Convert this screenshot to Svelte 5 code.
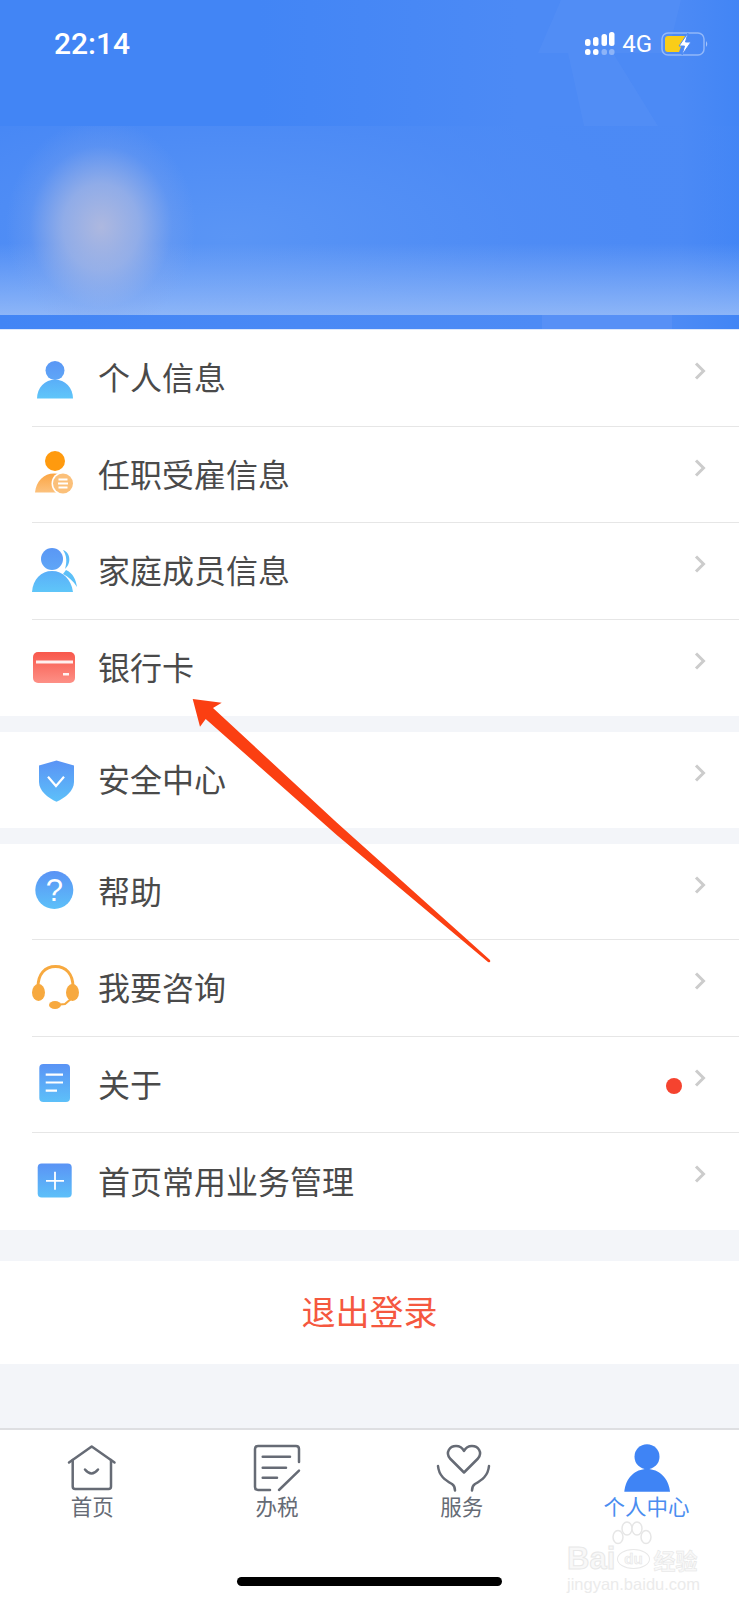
<script>
	const groups = [
		[
			{ label: '个人信息', icon: 'person' },
			{ label: '任职受雇信息', icon: 'job' },
			{ label: '家庭成员信息', icon: 'family' },
			{ label: '银行卡', icon: 'card' }
		],
		[{ label: '安全中心', icon: 'shield' }],
		[
			{ label: '帮助', icon: 'help' },
			{ label: '我要咨询', icon: 'headset' },
			{ label: '关于', icon: 'doc', dot: true },
			{ label: '首页常用业务管理', icon: 'plus' }
		]
	];

	const tabs = [
		{ label: '首页', icon: 'home' },
		{ label: '办税', icon: 'tax' },
		{ label: '服务', icon: 'service' },
		{ label: '个人中心', icon: 'me', active: true }
	];
</script>

{#snippet rowIcon(name)}
	<svg class="row-icon" viewBox="0 0 48 48" width="48" height="48">
		{#if name === 'person'}
			<circle cx="23" cy="17.5" r="9.5" fill="url(#headBlue)" />
			<path d="M5 45.5C5 35 13 26.5 23 26.5S41 35 41 45.5Z" fill="url(#bodyBlue)" />
		{:else if name === 'job'}
			<circle cx="23" cy="12" r="10" fill="#ff9a0e" />
			<path d="M3 43.500C4 32 12 24.500 22 24.500S36 30 38 43.500Z" fill="url(#bodyOrange)" />
			<circle cx="31" cy="34.500" r="11.500" fill="#fff" />
			<circle cx="31" cy="34.500" r="10" fill="#fbc07a" />
			<path d="M26.500 30.500H35.500M26 34.500H36M26.500 38.500H35.500" stroke="#fff" stroke-width="2.200" />
		{:else if name === 'family'}
			<path d="M31 4C38 6 40 17 33 23C35 16 35 10 31 4Z" fill="#5cbcf8" />
			<path d="M34 24C41 27 44 34 45 41C41 35 37 31 31 28Z" fill="#5cc0f8" />
			<circle cx="20" cy="13" r="11" fill="url(#headBlue)" />
			<path d="M0 46C1 33 9 25 20 25S39 33 41 46Z" fill="url(#bodyBlue)" />
		{:else if name === 'card'}
			<rect x="1" y="9" width="42" height="31" rx="5" fill="url(#cardRed)" />
			<rect x="4" y="17.500" width="37" height="3" fill="#fff" opacity="0.9" />
			<rect x="31" y="30" width="6" height="2.500" fill="#fff" opacity="0.9" />
		{:else if name === 'shield'}
			<path d="M24.500 5.500L42 10.500V27C42 36 33 43 24.500 46.700C16 43 7 36 7 27V10.500Z" fill="url(#shieldBlue)" />
			<path d="M16 21.700L24 31L32 21.700" fill="none" stroke="#fff" stroke-width="2.200" />
		{:else if name === 'help'}
			<circle cx="22.300" cy="24" r="19" fill="url(#shieldBlue)" />
			<text x="22.300" y="35" text-anchor="middle" class="qmark">?</text>
		{:else if name === 'headset'}
			<path d="M6 24C6 11 13 3.500 23.500 3.500S41 11 41 24" fill="none" stroke="#f7a93f" stroke-width="3" />
			<ellipse cx="6.500" cy="29.500" rx="6.500" ry="8.500" fill="#f7a93f" />
			<ellipse cx="40.500" cy="29.500" rx="6.500" ry="8.500" fill="#f7a93f" />
			<path d="M23 42L33 41L40 35" fill="none" stroke="#f7a93f" stroke-width="2.200" />
			<ellipse cx="23" cy="42" rx="6" ry="4" fill="#f7a93f" />
		{:else if name === 'doc'}
			<rect x="7.300" y="5" width="30.700" height="38" rx="4" fill="url(#shieldBlue)" />
			<path d="M13.700 15.700H31M13.700 23.500H31M13.700 31.700H25" stroke="#fff" stroke-width="2.200" />
		{:else if name === 'plus'}
			<rect x="5.700" y="7.500" width="34" height="34" rx="4" fill="url(#shieldBlue)" />
			<path d="M14 24.800H32M23 15.800V33.800" stroke="#fff" stroke-width="1.800" />
		{/if}
	</svg>
{/snippet}

{#snippet tabIcon(name)}
	<svg class="tab-icon" viewBox="0 0 48 48" width="48" height="48" fill="none" stroke="#666b75" stroke-width="2.500" stroke-linecap="round" stroke-linejoin="round">
		{#if name === 'home'}
			<path d="M1 18.500L23.700 2.500L46.500 18.500" />
			<path d="M4.700 16V42.500Q4.700 45 7.200 45H40.500Q43 45 43 42.500V16" />
			<path d="M17 25.500Q23.500 33.500 30 25.500" />
		{:else if name === 'tax'}
			<path d="M46 18V5Q46 2 43 2H5Q2 2 2 5V43Q2 46 5 46H17" />
			<path d="M9.700 12.700H37M9.700 23.700H33M9.700 33.700H24M26 46L46 26.700" />
		{:else if name === 'service'}
			<path d="M26 28.500L12 14.500C7 8 12 2 18 2C22 2 24.500 4 26 7C27.500 4 30 2 34 2C40 2 45 8 40 14.500Z" />
			<path d="M0 22C1 32 7 36 14 40Q17 42 17 46.500M51 22C50 32 44 36 37 40Q34 42 34 46.500" />
		{:else if name === 'me'}
			<circle cx="24" cy="12.700" r="12.500" fill="#3f84f5" stroke="none" />
			<path d="M1.300 47.700C2.500 34 12 25 24 25S45.500 34 47 47.700Z" fill="#3f84f5" stroke="none" />
		{/if}
	</svg>
{/snippet}

<div class="page">
	<svg class="defs" width="0" height="0">
		<defs>
			<linearGradient id="headBlue" x1="0" y1="0" x2="0" y2="1"><stop offset="0" stop-color="#5a97f5" /><stop offset="1" stop-color="#5fa6f7" /></linearGradient>
			<linearGradient id="bodyBlue" x1="0" y1="0" x2="0" y2="1"><stop offset="0" stop-color="#5aaef8" /><stop offset="1" stop-color="#5fc6f9" /></linearGradient>
			<linearGradient id="bodyOrange" x1="0" y1="0" x2="0" y2="1"><stop offset="0" stop-color="#fba543" /><stop offset="1" stop-color="#fcc27e" /></linearGradient>
			<linearGradient id="cardRed" x1="0" y1="0" x2="0" y2="1"><stop offset="0" stop-color="#f8574b" /><stop offset="1" stop-color="#fd9086" /></linearGradient>
			<linearGradient id="shieldBlue" x1="0" y1="0" x2="0" y2="1"><stop offset="0" stop-color="#5a93f5" /><stop offset="1" stop-color="#5dc0f9" /></linearGradient>
		</defs>
	</svg>

	<header class="hero">
		<div class="shape-top"></div>
		<div class="glow"></div>
		<div class="strip"></div>
		<div class="status">
			<span class="time">22:14</span>
			<div class="status-right">
				<svg width="30" height="24" viewBox="0 0 30 24" fill="#fff">
					<rect x="0" y="7" width="5.500" height="7" rx="2.500" />
					<rect x="8" y="5" width="5.500" height="9" rx="2.500" />
					<rect x="16.500" y="2" width="5.500" height="12" rx="2.500" />
					<rect x="24" y="0" width="5.500" height="14" rx="2.500" />
					<rect x="0" y="17" width="5.500" height="6" rx="2.500" />
					<rect x="8" y="17" width="5.500" height="6" rx="2.500" />
					<rect x="16.500" y="17" width="5.500" height="6" rx="2.500" opacity="0.35" />
					<rect x="24" y="17" width="5.500" height="6" rx="2.500" opacity="0.35" />
				</svg>
				<span class="net">4G</span>
				<svg width="48" height="24" viewBox="0 0 48 24">
					<rect x="1" y="1" width="42" height="22" rx="6" fill="none" stroke="#fff" stroke-opacity="0.4" stroke-width="1.500" />
					<path d="M45 9Q47.500 12 45 15Z" fill="#fff" fill-opacity="0.5" />
					<path d="M4 7Q4 4 7 4H24L18 20H7Q4 20 4 17Z" fill="#f9cd18" />
					<path d="M27 1L18 14H23.500L21 23L30 10H24.500Z" fill="#fff" stroke="#4f8cf5" stroke-width="1" />
				</svg>
			</div>
		</div>
	</header>

	{#each groups as rows}
		<section class="group">
			{#each rows as row}
				<div class="row">
					{@render rowIcon(row.icon)}
					<span class="row-label">{row.label}</span>
					{#if row.dot}<span class="dot"></span>{/if}
					<svg class="chev" width="12" height="18" viewBox="0 0 12 18" fill="none" stroke="#cccccc" stroke-width="3">
						<path d="M2 1.500L9.500 9L2 16.500" />
					</svg>
				</div>
			{/each}
		</section>
	{/each}

	<button class="logout">退出登录</button>

	<div class="spacer"></div>

	<nav class="tabbar">
		{#each tabs as tab}
			<div class="tab" class:active={tab.active}>
				{@render tabIcon(tab.icon)}
				<span>{tab.label}</span>
			</div>
		{/each}
		<div class="home-bar"></div>
		<div class="watermark">
			<svg class="paw" width="40" height="28" viewBox="0 0 40 28" fill="#fff" stroke="#e6e6e6" stroke-width="1.500">
				<ellipse cx="6" cy="16" rx="5" ry="6.500" />
				<ellipse cx="15" cy="7.500" rx="5" ry="6.500" />
				<ellipse cx="25" cy="7.500" rx="5" ry="6.500" />
				<ellipse cx="34" cy="16" rx="5" ry="6.500" />
			</svg>
			<div class="wm-main"><span>Bai</span><span class="wm-du">du</span><span class="wm-cn">经验</span></div>
			<div class="wm-url">jingyan.baidu.com</div>
		</div>
	</nav>

	<svg class="arrow" width="739" height="1600" viewBox="0 0 739 1600">
		<path d="M192.700 699L221.700 702.700L213 708L336.700 822.500L490 960Q491 963 488 962L336.700 835L205.700 719L200 726.700Z" fill="#fb3f12" />
	</svg>
</div>

<style>
	:global(body) {
		margin: 0;
		background: #f3f5f9;
	}

	.page {
		position: relative;
		width: 739px;
		height: 1600px;
		display: flex;
		flex-direction: column;
		background: #f3f5f9;
		font-family: "Noto Sans CJK SC", "Noto Sans", sans-serif;
		overflow: hidden;
	}

	.defs {
		position: absolute;
	}

	.hero {
		position: relative;
		height: 330px;
		flex: none;
		background: linear-gradient(to right, #4285f5 0, #4285f5 35%, #4c8af5 70%, #4c8af5 92%, #4285f5 100%);
		overflow: hidden;
		box-sizing: border-box;
		border-bottom: 1px solid #dbe7fc;
	}

	.shape-top {
		position: absolute;
		left: 0;
		top: 0;
		width: 739px;
		height: 126px;
		background: #6a9df7;
		opacity: 0.18;
		clip-path: polygon(561px 0, 681px 0, 668px 53px, 613px 53px, 658px 126px, 584px 126px, 568px 53px, 538px 53px);
	}

	.glow {
		position: absolute;
		left: 0;
		top: 126px;
		width: 739px;
		height: 189px;
		background:
			radial-gradient(ellipse 95px 108px at 101px 101px, rgba(178, 186, 222, 0.95) 0%, rgba(165, 182, 228, 0.75) 40%, rgba(130, 165, 235, 0.25) 75%, rgba(120, 160, 240, 0) 100%),
			linear-gradient(to bottom, rgba(148, 186, 248, 0) 62%, rgba(148, 186, 248, 0.9) 100%),
			radial-gradient(ellipse 420px 170px at 230px 110px, rgba(90, 149, 245, 1) 0%, rgba(79, 140, 245, 0.7) 70%, rgba(74, 137, 245, 0.15) 100%);
	}

	.strip {
		position: absolute;
		left: 0;
		top: 315px;
		width: 739px;
		height: 14px;
		background: linear-gradient(to right, #4285f5 0, #4a89f5 300px, #4d8bf5 542px, #5790f6 542px, #5790f6 672px, #4d8bf5 672px, #4285f5 100%);
	}

	.status {
		position: relative;
		display: flex;
		justify-content: space-between;
		align-items: center;
		padding: 26px 30px 0 54px;
		color: #fff;
		font-family: Roboto, "Liberation Sans", sans-serif;
	}

	.time {
		font-size: 30px;
		line-height: 36px;
		font-weight: 500;
	}

	.status-right {
		display: flex;
		align-items: center;
		gap: 7px;
	}

	.net {
		font-size: 24px;
		line-height: 24px;
		margin-right: 2px;
	}

	.group {
		background: #fff;
		padding-left: 32px;
		margin-bottom: 15.500px;
	}

	.group:nth-of-type(3) {
		margin-bottom: 31px;
	}

	.row {
		position: relative;
		display: flex;
		align-items: center;
		gap: 19px;
		height: 96.500px;
		box-sizing: border-box;
		border-bottom: 1.500px solid #e6e6e6;
	}

	.row:last-child {
		border-bottom: none;
	}

	.row-icon {
		flex: none;
		overflow: visible;
		margin-bottom: 2px;
	}

	.row-label {
		font-size: 32px;
		line-height: 44px;
		color: #4a4a4a;
		margin: 0 0 3px -1px;
		flex: 1;
	}

	.qmark {
		font-family: "Liberation Sans", Arial, sans-serif;
		font-size: 31px;
		fill: #fff;
	}

	.chev {
		position: absolute;
		right: 33px;
		top: 32px;
	}

	.dot {
		position: absolute;
		right: 57px;
		top: 41px;
		width: 16px;
		height: 16px;
		border-radius: 50%;
		background: #f5432f;
	}

	.logout {
		flex: none;
		height: 103px;
		border: none;
		padding: 0 0 4px;
		background: #fff;
		color: #f5583f;
		font-family: inherit;
		font-size: 34px;
	}

	.spacer {
		flex: 1;
	}

	.tabbar {
		position: relative;
		flex: none;
		height: 172px;
		box-sizing: border-box;
		display: grid;
		grid-template-columns: repeat(4, 1fr);
		align-items: start;
		background: #fff;
		border-top: 2px solid #dedfe2;
		padding-top: 14px;
	}

	.tab {
		display: flex;
		flex-direction: column;
		align-items: center;
		color: #666b75;
		font-size: 21.500px;
		line-height: 30px;
	}

	.tab.active {
		color: #4a8df0;
	}

	.tab-icon {
		overflow: visible;
		margin-bottom: -1px;
	}

	.home-bar {
		position: absolute;
		left: 237px;
		bottom: 14px;
		width: 265px;
		height: 9px;
		border-radius: 5px;
		background: #000;
	}

	.watermark {
		position: absolute;
		left: 567px;
		top: 91px;
		width: 140px;
		color: #f8f8f8;
		font-family: "Liberation Sans", Arial, sans-serif;
	}

	.paw {
		position: absolute;
		left: 45px;
		top: 0;
	}

	.wm-main {
		position: relative;
		display: flex;
		align-items: center;
		margin-top: 22px;
		font-size: 31px;
		line-height: 32px;
		font-weight: 700;
		-webkit-text-stroke: 1px #e8e8e8;
	}

	.wm-du {
		font-size: 15px;
		margin: 0 4px 0 2px;
		padding: 0 6px;
		border: 1.500px solid #e8e8e8;
		border-radius: 50%;
		line-height: 18px;
		-webkit-text-stroke: 0.500px #e4e4e4;
	}

	.wm-cn {
		font-family: "Noto Sans CJK SC", sans-serif;
		font-size: 22px;
		-webkit-text-stroke: 0.500px #e4e4e4;
	}

	.wm-url {
		font-size: 16.500px;
		line-height: 18px;
		color: #ebebeb;
	}

	.arrow {
		position: absolute;
		left: 0;
		top: 0;
		pointer-events: none;
	}
</style>
